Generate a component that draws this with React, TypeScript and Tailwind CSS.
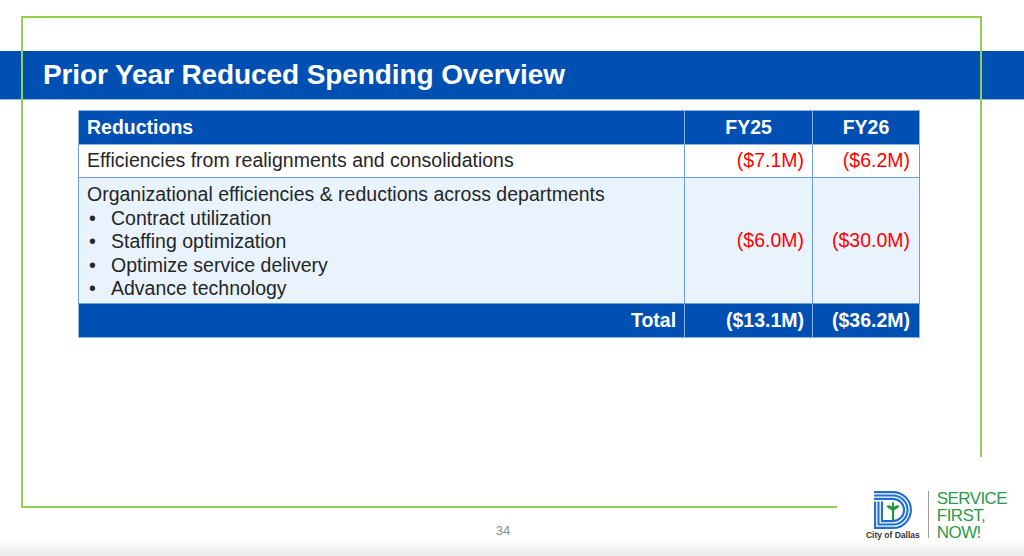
import React from "react";

const rows = [
  { label: "Efficiencies from realignments and consolidations", fy25: "($7.1M)", fy26: "($6.2M)" },
];

const bullets = ["Contract utilization", "Staffing optimization", "Optimize service delivery", "Advance technology"];

function DallasLogo() {
  return (
    <svg width="38" height="38" viewBox="0 0 38 38" fill="none">
      {[0, 3.4, 6.8].map((o) => {
        const c = 1.1 + o;
        const r = 19 - c;
        return (
          <path
            key={o}
            d={`M0 ${c} H19 A${r} ${r} 0 0 1 19 ${38 - c} H${c} V10.5`}
            stroke="#1f6fd1"
            strokeWidth="2.1"
          />
        );
      })}
      {/* plant */}
      <path d="M19 15 V29" stroke="#1f9a3a" strokeWidth="2.2" />
      <path d="M19 17.5 C17 13.5 13.5 13.5 12.5 15.5 C14.5 17.5 16.5 19 19 19.5 Z" fill="#1f9a3a" />
      <path d="M19 17.5 C21 13.5 24.5 13.5 25.5 15.5 C23.5 17.5 21.5 19 19 19.5 Z" fill="#1f9a3a" />
      <path d="M19 17 C17.4 14.5 17.6 11.8 19 10.2 C20.4 11.8 20.6 14.5 19 17 Z" fill="#1f9a3a" />
    </svg>
  );
}

export default function App() {
  const cell = "border border-[#6d9edb]";
  return (
    <div
      className="relative w-[1024px] h-[556px] bg-white overflow-hidden flex flex-col"
      style={{ fontFamily: '"Liberation Sans", Arial, sans-serif' }}
    >
      {/* title bar */}
      <div className="mt-[51px] h-[49px] bg-[#0050b4] border-b border-[#9dbbe6] flex items-center pl-[43px]">
        <h1 className="text-white font-bold text-[28px] tracking-[-0.1px] leading-none">
          Prior Year Reduced Spending Overview
        </h1>
      </div>

      {/* table */}
      <div className="pt-[10px] pl-[78px]">
        <table className="w-[842px] border-collapse text-[19.5px] leading-[23.6px] text-[#262626]">
          <colgroup>
            <col className="w-[607px]" />
            <col className="w-[128px]" />
            <col className="w-[107px]" />
          </colgroup>
          <thead>
            <tr className="bg-[#0050b4] text-white font-bold h-[34px]">
              <th className={`${cell} border-[#8db3e6] text-left pl-[8px] font-bold`}>Reductions</th>
              <th className={`${cell} border-[#8db3e6] text-center font-bold`}>FY25</th>
              <th className={`${cell} border-[#8db3e6] text-center font-bold`}>FY26</th>
            </tr>
          </thead>
          <tbody>
            {rows.map((r) => (
              <tr key={r.label} className="bg-white h-[33px]">
                <td className={`${cell} pl-[8px]`}>{r.label}</td>
                <td className={`${cell} text-right pr-[8px] text-[#ff0000]`}>{r.fy25}</td>
                <td className={`${cell} text-right pr-[9px] text-[#ff0000]`}>{r.fy26}</td>
              </tr>
            ))}
            <tr className="bg-[#e8f3fd]">
              <td className={`${cell} pl-[8px] pt-[5px] pb-[2px]`}>
                <div>Organizational efficiencies &amp; reductions across departments</div>
                {bullets.map((b) => (
                  <div key={b} className="flex">
                    <span className="w-[24px] pl-[2px]">•</span>
                    <span>{b}</span>
                  </div>
                ))}
              </td>
              <td className={`${cell} text-right pr-[8px] text-[#ff0000]`}>($6.0M)</td>
              <td className={`${cell} text-right pr-[9px] text-[#ff0000]`}>($30.0M)</td>
            </tr>
            <tr className="bg-[#0050b4] text-white font-bold h-[34px]">
              <td className={`${cell} border-[#8db3e6] text-right pr-[8px]`}>Total</td>
              <td className={`${cell} border-[#8db3e6] text-right pr-[8px]`}>($13.1M)</td>
              <td className={`${cell} border-[#8db3e6] text-right pr-[9px]`}>($36.2M)</td>
            </tr>
          </tbody>
        </table>
      </div>

      <div className="flex-1" />

      {/* footer */}
      <div className="h-[56px] flex">
        <div className="ml-[488px] w-[30px] pt-[40px] text-center text-[13px] leading-none text-[#8a8a8a]">34</div>
        <div className="ml-auto mr-[17px] pt-[7px] flex items-start">
          <div className="flex flex-col items-center w-[54px]">
            <DallasLogo />
            <span className="mt-[2px] text-[8.5px] leading-none font-bold text-[#333]">City of Dallas</span>
          </div>
          <div className="ml-[8px] w-px h-[47px] bg-[#9a9a9a]" />
          <div className="ml-[8px] -mt-[1px] text-[17px] leading-[17px] text-[#2b9a48] tracking-[-0.6px]">
            <div>SERVICE</div>
            <div>FIRST,</div>
            <div>NOW!</div>
          </div>
        </div>
      </div>
      <div className="h-[16px] bg-gradient-to-b from-white to-[#ececec]" />

      {/* green frame */}
      <svg className="absolute inset-0 pointer-events-none" width="1024" height="556">
        <polyline points="837,507 22,507 22,17 981,17 981,457" fill="none" stroke="#92d050" strokeWidth="2" />
      </svg>
    </div>
  );
}
